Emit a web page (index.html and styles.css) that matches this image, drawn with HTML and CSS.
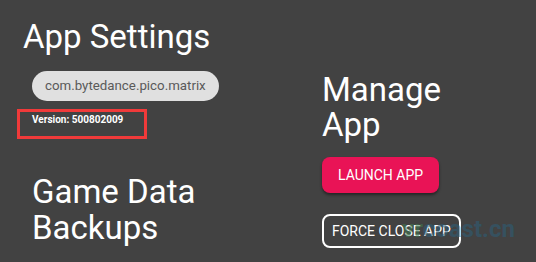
FILE: index.html
```html
<!DOCTYPE html>
<html lang="en">
<head>
    <meta charset="UTF-8">
    <meta name="viewport" content="width=device-width, initial-scale=1.0">
    <title>App Settings</title>
    <link rel="stylesheet" href="styles.css">
</head>
<body>
    <div class="page">
        <div class="column settings">
            <h2 class="title">App Settings</h2>
            <div class="details">
                <div class="package">com.bytedance.pico.matrix</div>
                <div class="version">Version: 500802009</div>
                <h2 class="title backups">Game Data Backups</h2>
            </div>
        </div>

        <div class="column manage">
            <h2 class="title">Manage App</h2>
            <button class="btn btn-launch">LAUNCH APP</button>
            <button class="btn btn-outline">FORCE CLOSE APP</button>
        </div>

        <!-- annotation over the version line -->
        <div class="highlight"></div>
        <div class="watermark"><span class="wm-vr">vr</span>coast.cn</div>
    </div>
</body>
</html>
```

FILE: styles.css
```css
* {
    margin: 0;
    padding: 0;
    box-sizing: border-box;
}

body {
    font-family: Roboto, 'Liberation Sans', sans-serif;
    background: #424242;
    color: white;
    width: 536px;
    height: 262px;
    overflow: hidden;
}

.page {
    position: relative;
    display: flex;
    height: 262px;
}

.column {
    display: flex;
    flex-direction: column;
    align-items: flex-start;
}

.settings {
    width: 322px;
    padding: 19px 0 0 23px;
}

.manage {
    padding-top: 72px;
}

.title {
    font-size: 33px;
    font-weight: 400;
    line-height: 36px;
}

.manage .title {
    width: 130px;
    line-height: 35px;
    margin-bottom: 15px;
}

.details {
    display: flex;
    flex-direction: column;
    align-items: flex-start;
    padding-left: 9px;
    margin-top: 16px;
}

.package {
    height: 30px;
    line-height: 30px;
    padding: 0 13px;
    border-radius: 15px;
    background: #e0e0e0;
    color: #5a5a5a;
    font-size: 13.3px;
}

.version {
    margin-top: 12px;
    font-size: 10px;
    font-weight: 700;
    line-height: 14px;
}

.backups {
    width: 200px;
    margin-top: 47px;
}

.btn {
    font-family: Roboto, 'Liberation Sans', sans-serif;
    font-size: 14px;
    color: white;
    border-radius: 8px;
    cursor: pointer;
}

.btn-launch {
    height: 36px;
    padding: 0 16px;
    background: #e91356;
    border: none;
    box-shadow: 0 2px 3px rgba(0,0,0,0.45);
}

.btn-outline {
    height: 34px;
    margin-top: 21px;
    padding: 0 8px;
    background: transparent;
    border: 2px solid white;
}

.highlight {
    position: absolute;
    left: 17px;
    top: 109px;
    width: 130px;
    height: 30px;
    border: 3px solid #f03a3a;
}

.watermark {
    position: absolute;
    left: 402px;
    top: 215px;
    font-size: 24px;
    font-weight: 700;
    color: #2d5e78;
    opacity: 0.55;
    pointer-events: none;
}

.wm-vr {
    color: #3f7a52;
}
```
